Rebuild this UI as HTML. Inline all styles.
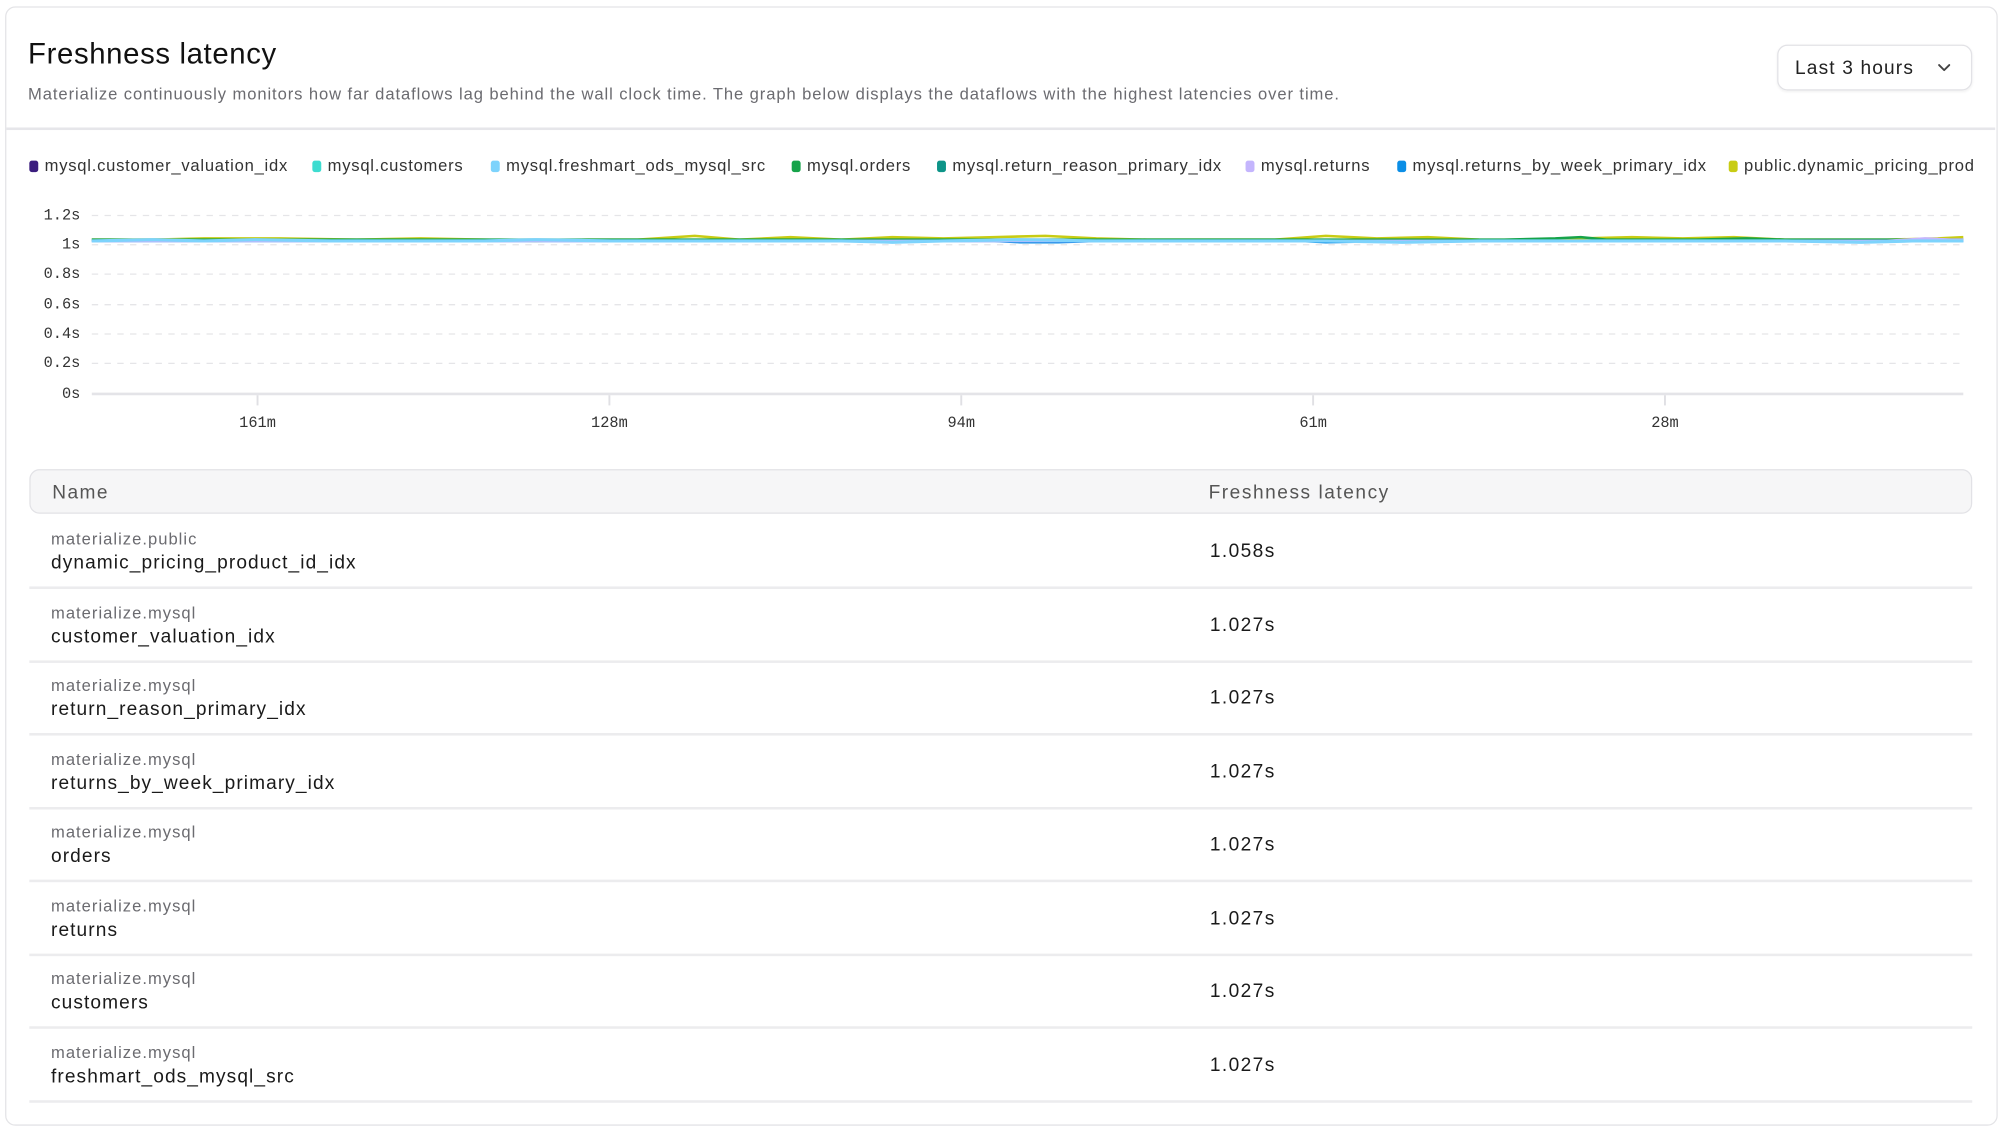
<!DOCTYPE html>
<html><head><meta charset="utf-8">
<style>
html,body{margin:0;padding:0;background:#fff;width:1999px;height:1127px;overflow:hidden}
#w{position:absolute;left:0;top:0;width:1568px;height:884px;transform:scale(1.27487);transform-origin:0 0;font-family:"Liberation Sans",sans-serif;color:#1a1a1a}
.card{position:absolute;left:4px;top:5px;width:1561px;height:876px;border:1px solid #e4e4e7;border-radius:8px;background:#fff}
.abs{position:absolute;white-space:nowrap}
.leg{position:absolute;top:122px;font-size:13px;color:#333;white-space:nowrap;letter-spacing:0.6px}
.leg i{display:inline-block;width:7px;height:9px;border-radius:2px;margin-right:5px;vertical-align:-1px}
.yl{position:absolute;right:1505px;font-family:"Liberation Mono",monospace;font-size:12px;color:#333;width:50px;text-align:right}
.xl{position:absolute;top:325px;font-family:"Liberation Mono",monospace;font-size:12px;color:#333;width:60px;text-align:center}
.row{position:absolute;left:23px;width:1524px;height:57px;border-bottom:2px solid #ececee}
.row .s{position:absolute;left:17px;top:12px;font-size:13px;color:#6b6b70;letter-spacing:0.8px}
.row .n{position:absolute;left:17px;top:30px;font-size:15px;color:#1a1a1a;letter-spacing:0.85px}
.row .v{position:absolute;left:926px;top:21px;font-size:15px;color:#1a1a1a;letter-spacing:1.1px}
</style></head><body><div id="w">
<div class="card"></div>
<div class="abs" style="left:22px;top:29px;font-size:23px;color:#111;letter-spacing:0.5px">Freshness latency</div>
<div class="abs" style="left:22px;top:66px;font-size:13px;color:#6b6b70;letter-spacing:0.72px">Materialize continuously monitors how far dataflows lag behind the wall clock time. The graph below displays the dataflows with the highest latencies over time.</div>
<div class="abs" style="left:1394px;top:35px;width:151px;height:34px;border:1px solid #e2e2e6;border-radius:8px;box-shadow:0 1px 2px rgba(0,0,0,0.06)">
<span class="abs" style="left:13px;top:9px;font-size:15px;color:#222;letter-spacing:0.9px">Last 3 hours</span>
<svg class="abs" style="left:124px;top:12px" width="12" height="10" viewBox="0 0 12 10"><path d="M2 3 L6 7 L10 3" fill="none" stroke="#444" stroke-width="1.5" stroke-linecap="round" stroke-linejoin="round"/></svg>
</div>
<div class="abs" style="left:5px;top:100px;width:1560px;height:2px;background:#e6e6ea"></div>

<div style="position:absolute;left:0;top:0;width:1548px;height:150px;overflow:hidden">
<div class="leg" style="left:23px"><i style="background:#3b1d7e"></i>mysql.customer_valuation_idx</div>
<div class="leg" style="left:245px"><i style="background:#3ddcd0"></i>mysql.customers</div>
<div class="leg" style="left:385px"><i style="background:#7dd3fc"></i>mysql.freshmart_ods_mysql_src</div>
<div class="leg" style="left:621px"><i style="background:#16a34a"></i>mysql.orders</div>
<div class="leg" style="left:735px"><i style="background:#0d9488"></i>mysql.return_reason_primary_idx</div>
<div class="leg" style="left:977px"><i style="background:#c4b5fd"></i>mysql.returns</div>
<div class="leg" style="left:1096px"><i style="background:#0b8ee6"></i>mysql.returns_by_week_primary_idx</div>
<div class="leg" style="left:1356px"><i style="background:#c8cc14"></i>public.dynamic_pricing_product_id_idx</div>
</div>

<div class="yl" style="top:162px">1.2s</div>
<div class="yl" style="top:185px">1s</div>
<div class="yl" style="top:208px">0.8s</div>
<div class="yl" style="top:232px">0.6s</div>
<div class="yl" style="top:255px">0.4s</div>
<div class="yl" style="top:278px">0.2s</div>
<div class="yl" style="top:302px">0s</div>

<svg class="abs" style="left:0;top:0" width="1568" height="340">
<g stroke="#e5e5e8" stroke-width="1" stroke-dasharray="5 5">
<line x1="72" y1="169" x2="1540" y2="169"/><line x1="72" y1="192" x2="1540" y2="192"/><line x1="72" y1="215" x2="1540" y2="215"/><line x1="72" y1="239" x2="1540" y2="239"/><line x1="72" y1="262" x2="1540" y2="262"/><line x1="72" y1="285" x2="1540" y2="285"/>
</g>
<line x1="72" y1="309" x2="1540" y2="309" stroke="#e4e4e8" stroke-width="2"/>
<g stroke="#e0e0e4" stroke-width="1.5"><line x1="202" y1="310" x2="202" y2="318"/><line x1="478" y1="310" x2="478" y2="318"/><line x1="754" y1="310" x2="754" y2="318"/><line x1="1030" y1="310" x2="1030" y2="318"/><line x1="1306" y1="310" x2="1306" y2="318"/></g>
<g fill="none" stroke-width="2" stroke-linejoin="round">
<polyline stroke="#c8cc14" points="72,188 120,188 160,187 220,187 280,188 330,187 380,188 420,189 460,188 500,188 545,185 580,188 620,186 660,188 700,186 740,187 780,186 820,185 860,187 900,188 960,188 1000,188 1040,185 1080,187 1120,186 1160,188 1200,189 1240,187 1280,186 1320,187 1360,186 1400,188 1440,188 1480,188 1520,187 1540,186"/>
<polyline stroke="#16a34a" points="72,188 300,188 600,188 900,188 1180,188 1220,187 1240,186 1260,188 1330,188 1370,187 1400,188 1540,188"/>
<polyline stroke="#0b8ee6" points="72,189 400,189 780,189 800,190 830,190 860,189 1020,189 1040,190 1100,189 1540,189"/>
<polyline stroke="#c4b5fd" points="72,189 600,189 1480,189 1510,187 1530,188 1540,188"/>
<polyline stroke="#7dd3fc" stroke-width="2.5" points="72,189 120,188 160,189 200,188 260,189 320,189 380,189 420,188 480,189 540,189 600,189 660,189 700,190 740,189 800,188 860,189 920,189 980,189 1040,189 1100,190 1160,189 1220,189 1280,189 1340,189 1400,189 1460,190 1500,189 1540,189"/>
</g>
</svg>
<div class="xl" style="left:172px">161m</div>
<div class="xl" style="left:448px">128m</div>
<div class="xl" style="left:724px">94m</div>
<div class="xl" style="left:1000px">61m</div>
<div class="xl" style="left:1276px">28m</div>

<div class="abs" style="left:23px;top:368px;width:1522px;height:33px;background:#f6f6f7;border:1px solid #e2e2e6;border-radius:8px">
<span class="abs" style="left:17px;top:9px;font-size:15px;color:#555;letter-spacing:1.1px">Name</span>
<span class="abs" style="left:924px;top:9px;font-size:15px;color:#555;letter-spacing:1.2px">Freshness latency</span>
</div>

<div class="row" style="top:403px"><span class="s">materialize.public</span><span class="n">dynamic_pricing_product_id_idx</span><span class="v">1.058s</span></div>
<div class="row" style="top:461px"><span class="s">materialize.mysql</span><span class="n">customer_valuation_idx</span><span class="v">1.027s</span></div>
<div class="row" style="top:518px"><span class="s">materialize.mysql</span><span class="n">return_reason_primary_idx</span><span class="v">1.027s</span></div>
<div class="row" style="top:576px"><span class="s">materialize.mysql</span><span class="n">returns_by_week_primary_idx</span><span class="v">1.027s</span></div>
<div class="row" style="top:633px"><span class="s">materialize.mysql</span><span class="n">orders</span><span class="v">1.027s</span></div>
<div class="row" style="top:691px"><span class="s">materialize.mysql</span><span class="n">returns</span><span class="v">1.027s</span></div>
<div class="row" style="top:748px"><span class="s">materialize.mysql</span><span class="n">customers</span><span class="v">1.027s</span></div>
<div class="row" style="top:806px"><span class="s">materialize.mysql</span><span class="n">freshmart_ods_mysql_src</span><span class="v">1.027s</span></div>
</div></body></html>
